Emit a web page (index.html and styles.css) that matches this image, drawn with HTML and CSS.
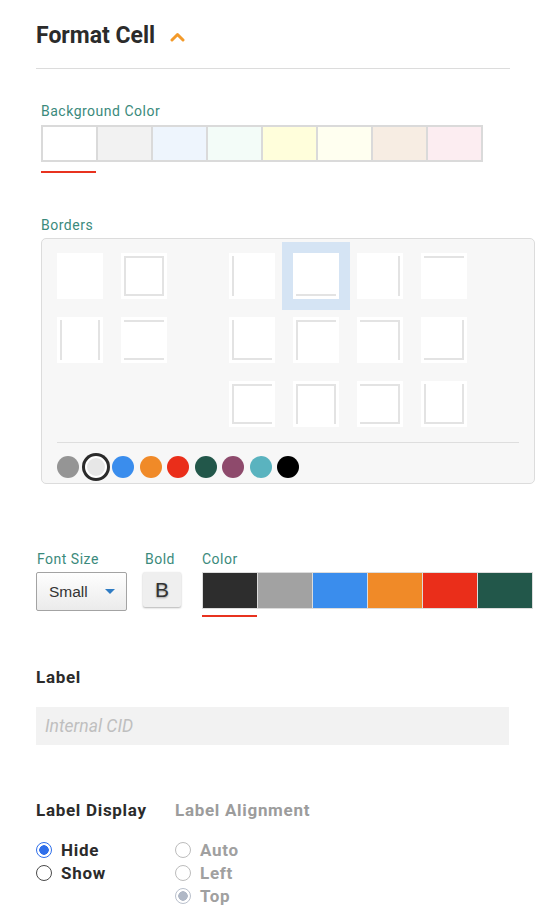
FILE: index.html
```html
<!DOCTYPE html>
<html lang="en">
<head>
<meta charset="utf-8">
<title>Format Cell</title>
<link rel="stylesheet" href="styles.css">
</head>
<body>
<div class="page">
  <div class="header">
    <h1 class="title">Format Cell</h1>
    <svg class="chevron" width="15" height="10" viewBox="0 0 15 10"><path d="M2 8 L7.5 2.5 L13 8" fill="none" stroke="#f39a2a" stroke-width="3" stroke-linecap="round" stroke-linejoin="round"/></svg>
  </div>

  <section class="bg-section">
    <div class="field-label">Background Color</div>
    <div class="bg-swatches">
      <span class="bg-sw bg1"></span>
      <span class="bg-sw bg2"></span>
      <span class="bg-sw bg3"></span>
      <span class="bg-sw bg4"></span>
      <span class="bg-sw bg5"></span>
      <span class="bg-sw bg6"></span>
      <span class="bg-sw bg7"></span>
      <span class="bg-sw bg8"></span>
    </div>
    <div class="underline"></div>
  </section>

  <section class="borders-section">
    <div class="field-label">Borders</div>
    <div class="borders-panel">
      <div class="tile-grid">
        <div class="tile-group two">
          <div class="tile"><span class="ln"></span></div>
          <div class="tile"><span class="ln t r b l"></span></div>
          <div class="tile"><span class="ln l r"></span></div>
          <div class="tile"><span class="ln t b"></span></div>
        </div>
        <div class="tile-group four">
          <div class="tile"><span class="ln l"></span></div>
          <div class="tile selected"><span class="ln b"></span></div>
          <div class="tile"><span class="ln r"></span></div>
          <div class="tile"><span class="ln t"></span></div>
          <div class="tile"><span class="ln l b"></span></div>
          <div class="tile"><span class="ln l t"></span></div>
          <div class="tile"><span class="ln t r"></span></div>
          <div class="tile"><span class="ln r b"></span></div>
          <div class="tile"><span class="ln t l b"></span></div>
          <div class="tile"><span class="ln l t r"></span></div>
          <div class="tile"><span class="ln t r b"></span></div>
          <div class="tile"><span class="ln l b r"></span></div>
        </div>
      </div>
      <div class="panel-divider"></div>
      <div class="dots">
        <span class="dot d1"></span>
        <span class="dot d2 sel"></span>
        <span class="dot d3"></span>
        <span class="dot d4"></span>
        <span class="dot d5"></span>
        <span class="dot d6"></span>
        <span class="dot d7"></span>
        <span class="dot d8"></span>
        <span class="dot d9"></span>
      </div>
    </div>
  </section>

  <section class="format-row">
    <div class="col-size">
      <div class="field-label size-label">Font Size</div>
      <div class="select">
        <span>Small</span>
        <svg width="10" height="5" viewBox="0 0 10 5"><path d="M0 0 H10 L5 5 Z" fill="#2f7cc4"/></svg>
      </div>
    </div>
    <div class="col-bold">
      <div class="field-label bold-label">Bold</div>
      <div class="bold-btn">B</div>
    </div>
    <div class="col-color">
      <div class="field-label">Color</div>
      <div class="color-swatches">
        <span class="c-sw c1"></span>
        <span class="c-sw c2"></span>
        <span class="c-sw c3"></span>
        <span class="c-sw c4"></span>
        <span class="c-sw c5"></span>
        <span class="c-sw c6"></span>
      </div>
      <div class="underline short"></div>
    </div>
  </section>

  <section class="label-section">
    <div class="heading">Label</div>
    <input class="text-input" type="text" placeholder="Internal CID">
  </section>

  <section class="display-section">
    <div class="display-col">
      <div class="heading">Label Display</div>
      <div class="radio-list">
        <div class="radio-row"><span class="radio on"></span><span>Hide</span></div>
        <div class="radio-row"><span class="radio"></span><span>Show</span></div>
      </div>
    </div>
    <div class="display-col muted">
      <div class="heading">Label Alignment</div>
      <div class="radio-list">
        <div class="radio-row"><span class="radio dis"></span><span>Auto</span></div>
        <div class="radio-row"><span class="radio dis"></span><span>Left</span></div>
        <div class="radio-row"><span class="radio dis-on"></span><span>Top</span></div>
      </div>
    </div>
  </section>
</div>
</body>
</html>
```

FILE: styles.css
```css
* { box-sizing: border-box; }

body {
  margin: 0;
  background: #ffffff;
  font-family: Roboto, "Liberation Sans", sans-serif;
  color: #2b2b2b;
}

.page {
  padding: 0 38px 0 36px;
}

/* Header */
.header {
  display: flex;
  align-items: center;
  gap: 15px;
  height: 69px;
  padding: 18px 0 14px;
  border-bottom: 1px solid #dcdcdc;
}

.title {
  margin: 0;
  font-size: 23px;
  line-height: 36px;
  font-weight: 700;
  color: #2b2b2b;
}

.chevron {
  display: block;
  margin-top: 2px;
}

/* Labels */
.field-label {
  font-size: 14px;
  line-height: 16px;
  color: #3b8a7c;
  letter-spacing: 0.5px;
}

/* Background color */
.bg-section {
  margin: 34px 0 0 5px;
}

.bg-swatches {
  display: flex;
  gap: 2px;
  padding: 2px;
  width: max-content;
  margin-top: 6px;
  background: #dadada;
}

.bg-sw {
  display: block;
  width: 53px;
  height: 33px;
}

.bg1 { background: #ffffff; }
.bg2 { background: #f2f2f2; }
.bg3 { background: #eef5fd; }
.bg4 { background: #f3fcf8; }
.bg5 { background: #fffedb; }
.bg6 { background: #fffff0; }
.bg7 { background: #f7ede3; }
.bg8 { background: #fcedf1; }

.underline {
  width: 55px;
  height: 2px;
  margin-top: 9px;
  background: #e8321f;
}

.underline.short {
  margin-top: 6px;
}

/* Borders */
.borders-section {
  margin: 44px 0 0 5px;
}

.borders-panel {
  margin-top: 5px;
  width: 494px;
  padding: 14px 15px 5px;
  border: 1px solid #dcdcdc;
  border-radius: 5px;
  background: #f7f7f7;
}

.tile-grid {
  display: flex;
  align-items: flex-start;
  gap: 62px;
}

.tile-group {
  display: grid;
  gap: 18px;
}

.tile-group.two { grid-template-columns: repeat(2, 46px); }
.tile-group.four { grid-template-columns: repeat(4, 46px); }

.tile {
  width: 46px;
  height: 46px;
  padding: 3px;
  background: #ffffff;
}

.tile.selected {
  box-shadow: 0 0 0 11px #d5e4f4;
}

.ln {
  display: block;
  width: 100%;
  height: 100%;
  border: 0 solid #e3e3e3;
}

.ln.t { border-top-width: 2px; }
.ln.r { border-right-width: 2px; }
.ln.b { border-bottom-width: 2px; }
.ln.l { border-left-width: 2px; }

.panel-divider {
  height: 1px;
  margin-top: 15px;
  background: #dedede;
}

.dots {
  display: flex;
  gap: 5.5px;
  margin-top: 13px;
}

.dot {
  display: block;
  width: 22px;
  height: 22px;
  border-radius: 50%;
}

.dot.sel {
  border: 2px solid #ffffff;
  box-shadow: 0 0 0 3px #2b2b2b;
}

.d1 { background: #959595; }
.d2 { background: #e7e7e7; }
.d3 { background: #3a8ded; }
.d4 { background: #f08a28; }
.d5 { background: #ea2e1a; }
.d6 { background: #22574a; }
.d7 { background: #8e4a6c; }
.d8 { background: #5ab3bf; }
.d9 { background: #000000; }

/* Font size / bold / color */
.format-row {
  display: flex;
  margin-top: 67px;
}

.col-size { flex: none; width: 107px; }
.col-bold { flex: none; width: 59px; }
.col-color { flex: none; }

.col-size .field-label,
.col-bold .field-label,
.col-color .field-label {
  margin-bottom: 5px;
}

.size-label { padding-left: 1px; }
.bold-label { padding-left: 2px; }

.select {
  display: flex;
  align-items: center;
  justify-content: space-between;
  width: 91px;
  height: 39px;
  padding: 0 11px 0 12px;
  border: 1px solid #a3a3a3;
  border-radius: 2px;
  background: linear-gradient(#fefefe, #ebebeb);
  font-family: "Liberation Sans", Arial, sans-serif;
  font-size: 15.5px;
  color: #333333;
}

.select svg { display: block; }

.bold-btn {
  display: flex;
  align-items: center;
  justify-content: center;
  width: 38px;
  height: 35px;
  margin-top: 1px;
  border-radius: 2px;
  background: #efefef;
  box-shadow: 0 1px 2px rgba(0, 0, 0, 0.3);
  font-family: "Liberation Sans", Arial, sans-serif;
  font-size: 21px;
  color: #333333;
  text-shadow: 0 1px 2px rgba(0, 0, 0, 0.35);
}

.color-swatches {
  display: flex;
  gap: 1px;
  padding: 1px;
  width: max-content;
  margin-top: 1px;
  background: #dcdcdc;
}

.c-sw {
  display: block;
  width: 54px;
  height: 35px;
}

.c1 { background: #2d2d2d; }
.c2 { background: #a2a2a2; }
.c3 { background: #3a8ded; }
.c4 { background: #f08a28; }
.c5 { background: #ea2e1a; }
.c6 { background: #22574a; }

/* Label */
.label-section {
  margin-top: 50px;
}

.heading {
  font-size: 17px;
  line-height: 20px;
  font-weight: 700;
  letter-spacing: 0.7px;
  color: #2b2b2b;
}

.text-input {
  display: block;
  width: 473px;
  height: 38px;
  margin-top: 20px;
  padding: 0 9px;
  border: none;
  outline: none;
  background: #f2f2f2;
  font-family: Roboto, "Liberation Sans", sans-serif;
  font-size: 17.5px;
  font-style: italic;
  color: #333333;
}

.text-input::placeholder {
  color: #bfbfbf;
  font-style: italic;
}

/* Label display */
.display-section {
  display: flex;
  margin-top: 55px;
}

.display-col { width: 139px; }

.display-col.muted .heading { color: #9c9c9c; }

.radio-list {
  margin-top: 18px;
}

.radio-row {
  display: flex;
  align-items: center;
  gap: 9px;
  height: 23px;
  font-size: 17px;
  font-weight: 700;
  letter-spacing: 0.7px;
  color: #2b2b2b;
}

.muted .radio-row { color: #a0a0a0; }

.radio {
  display: block;
  flex: none;
  width: 16px;
  height: 16px;
  border-radius: 50%;
  border: 1px solid #4a4a4a;
  background: #ffffff;
}

.radio.on {
  border: 1.5px solid #2f6fea;
  background: radial-gradient(circle, #2f6fea 0 4.5px, #ffffff 5px);
}

.radio.dis {
  border-color: #bcbcbc;
}

.radio.dis-on {
  border-color: #b9c0cc;
  background: radial-gradient(circle, #b0b8c6 0 4.5px, #ffffff 5px);
}
```
